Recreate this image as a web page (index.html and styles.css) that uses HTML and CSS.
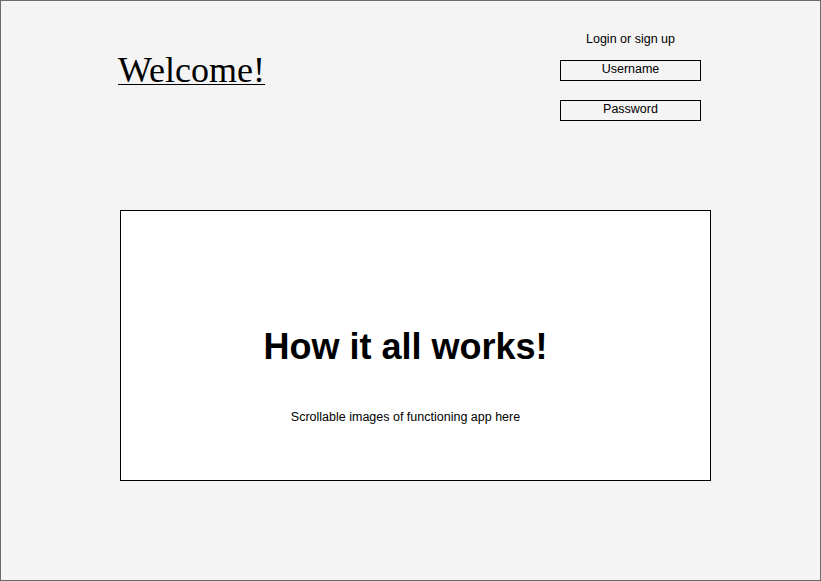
FILE: index.html
```html
<!DOCTYPE html>
<html>
<head>
<meta charset="utf-8">
<link rel="stylesheet" href="styles.css">
</head>
<body>
<div class="frame">
  <header class="top">
    <h1 class="welcome">Welcome!</h1>
    <div class="login">
      <div class="login-title">Login or sign up</div>
      <div class="field">Username</div>
      <div class="field">Password</div>
    </div>
  </header>
  <section class="showcase">
    <h2 class="showcase-title">How it all works!</h2>
    <p class="showcase-sub">Scrollable images of functioning app here</p>
  </section>
</div>
</body>
</html>
```
FILE: styles.css
```css
html, body {
  margin: 0;
  padding: 0;
}
body {
  font-family: "Liberation Sans", Arial, sans-serif;
  color: #000;
  background: #f4f4f4;
}
.frame {
  width: 821px;
  height: 581px;
  box-sizing: border-box;
  border: 1px solid #6b6b6b;
  background: #f4f4f4;
  display: flex;
  flex-direction: column;
}
.top {
  display: grid;
  grid-template-columns: 1fr 141px;
  padding: 0 119px 0 117px;
}
.welcome {
  margin: 49px 0 0 0;
  font-family: "Liberation Serif", "Times New Roman", serif;
  font-weight: normal;
  font-size: 36px;
  line-height: 40px;
  text-decoration: underline;
  text-decoration-thickness: 1px;
  text-underline-offset: 2px;
  justify-self: start;
}
.login {
  display: flex;
  flex-direction: column;
  padding-top: 31px;
}
.login-title {
  font-size: 12.5px;
  line-height: 14px;
  text-align: center;
  margin-bottom: 14px;
}
.field {
  height: 21px;
  box-sizing: border-box;
  border: 1px solid #000;
  font-size: 12.5px;
  line-height: 17px;
  text-align: center;
}
.field + .field {
  margin-top: 19px;
}
.showcase {
  margin: 89px 0 0 119px;
  width: 591px;
  height: 271px;
  box-sizing: border-box;
  border: 1px solid #000;
  background: #fff;
  padding: 115px 20px 0 0;
  text-align: center;
}
.showcase-title {
  margin: 0;
  font-size: 36px;
  line-height: 42px;
  font-weight: bold;
}
.showcase-sub {
  margin: 42px 0 0 0;
  font-size: 12.5px;
  line-height: 14px;
}
```
